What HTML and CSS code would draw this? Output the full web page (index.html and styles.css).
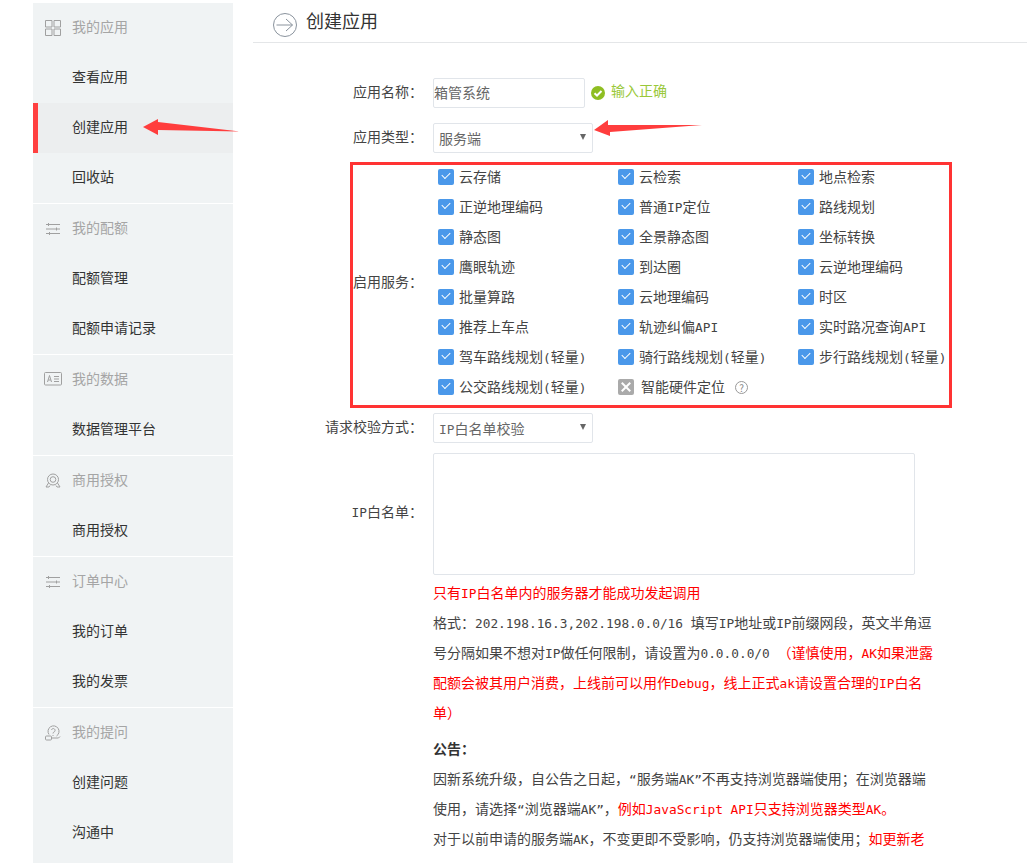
FILE: index.html
```html
<!DOCTYPE html>
<html lang="zh-CN">
<head>
    <meta charset="utf-8">
    <title>创建应用</title>
    <link rel="stylesheet" href="styles.css">
</head>
<body>
<div class="page">
    <div class="sidebar">
        <div class="nav-group">
            <div class="nav-head">
                <svg class="nav-icon" viewBox="0 0 16 16"><path d="M.5.5h6.500v6.500h-6.500zM9 .5h6.500v6.500h-6.500zM.5 9h6.500v6.500h-6.500zM9 9h6.500v6.500h-6.500z"/></svg>
                我的应用
            </div>
            <div class="nav-item">查看应用</div>
            <div class="nav-item active">创建应用</div>
            <div class="nav-item">回收站</div>
        </div>
        <div class="nav-group">
            <div class="nav-head">
                <svg class="nav-icon" viewBox="0 0 16 16"><path d="M1 3.500h14M1 8h14M1 12.500h14M3.500 2v3M11.500 6.500v3M4.500 11v3"/></svg>
                我的配额
            </div>
            <div class="nav-item">配额管理</div>
            <div class="nav-item">配额申请记录</div>
        </div>
        <div class="nav-group">
            <div class="nav-head">
                <svg class="nav-icon wide" viewBox="0 0 18 14"><rect x=".5" y=".5" width="17" height="12.500" rx="1"/><path d="M3.500 10l2-6.500 2 6.500M4.300 8h2.400M10 4.500h5M10 7h5M10 9.500h5"/></svg>
                我的数据
            </div>
            <div class="nav-item">数据管理平台</div>
        </div>
        <div class="nav-group">
            <div class="nav-head">
                <svg class="nav-icon" viewBox="0 0 16 16"><circle cx="8" cy="6.500" r="5.500"/><circle cx="8" cy="6.500" r="2.800"/><path d="M3.500 10l-2.500 4h3l1-1.500M12.500 10l2.500 4h-3l-1-1.500"/></svg>
                商用授权
            </div>
            <div class="nav-item">商用授权</div>
        </div>
        <div class="nav-group">
            <div class="nav-head">
                <svg class="nav-icon" viewBox="0 0 16 16"><path d="M1 3.500h14M1 8h14M1 12.500h14M3.500 2v3M11.500 6.500v3M4.500 11v3"/></svg>
                订单中心
            </div>
            <div class="nav-item">我的订单</div>
            <div class="nav-item">我的发票</div>
        </div>
        <div class="nav-group">
            <div class="nav-head">
                <svg class="nav-icon" viewBox="0 0 16 16"><path d="M4 9.500a5.500 5.500 0 1 1 7.500 1.500"/><path d="M6.500 5a1.800 1.800 0 1 1 2.500 2c-.7.4-1 .8-1 1.500M8 10v1"/><rect x=".5" y="11" width="6" height="4" rx="1"/><path d="M6.500 13h7l1.500-1.500"/></svg>
                我的提问
            </div>
            <div class="nav-item">创建问题</div>
            <div class="nav-item">沟通中</div>
        </div>
    </div>

    <div class="main">
        <div class="title-bar">
            <svg class="title-icon" viewBox="0 0 24 24"><circle cx="12" cy="12" r="11.500"/><path d="M3.500 12h16M13 6l6.500 6-6.500 6"/></svg>
            <h1>创建应用</h1>
        </div>

        <div class="form">
            <div class="row">
                <div class="label">应用名称：</div>
                <div class="input">箱管系统</div>
                <svg class="ok-icon" viewBox="0 0 14 14"><circle cx="7" cy="7" r="7"/><path d="M3.500 7.200l2.500 2.300 4.500-4.500"/></svg>
                <span class="ok-text">输入正确</span>
            </div>
            <div class="row type">
                <div class="label">应用类型：</div>
                <div class="select">服务端</div>
            </div>

            <div class="row services">
                <div class="label">启用服务：</div>
                <div class="service-grid">
                    <div class="service"><i class="check"></i><span>云存储</span></div>
                    <div class="service"><i class="check"></i><span>云检索</span></div>
                    <div class="service"><i class="check"></i><span>地点检索</span></div>
                    <div class="service"><i class="check"></i><span>正逆地理编码</span></div>
                    <div class="service"><i class="check"></i><span>普通<span class="en">IP</span>定位</span></div>
                    <div class="service"><i class="check"></i><span>路线规划</span></div>
                    <div class="service"><i class="check"></i><span>静态图</span></div>
                    <div class="service"><i class="check"></i><span>全景静态图</span></div>
                    <div class="service"><i class="check"></i><span>坐标转换</span></div>
                    <div class="service"><i class="check"></i><span>鹰眼轨迹</span></div>
                    <div class="service"><i class="check"></i><span>到达圈</span></div>
                    <div class="service"><i class="check"></i><span>云逆地理编码</span></div>
                    <div class="service"><i class="check"></i><span>批量算路</span></div>
                    <div class="service"><i class="check"></i><span>云地理编码</span></div>
                    <div class="service"><i class="check"></i><span>时区</span></div>
                    <div class="service"><i class="check"></i><span>推荐上车点</span></div>
                    <div class="service"><i class="check"></i><span>轨迹纠偏<span class="en">API</span></span></div>
                    <div class="service"><i class="check"></i><span>实时路况查询<span class="en">API</span></span></div>
                    <div class="service"><i class="check"></i><span>驾车路线规划<span class="en">(</span>轻量<span class="en">)</span></span></div>
                    <div class="service"><i class="check"></i><span>骑行路线规划<span class="en">(</span>轻量<span class="en">)</span></span></div>
                    <div class="service"><i class="check"></i><span>步行路线规划<span class="en">(</span>轻量<span class="en">)</span></span></div>
                    <div class="service"><i class="check"></i><span>公交路线规划<span class="en">(</span>轻量<span class="en">)</span></span></div>
                    <div class="service off"><i class="cross"></i><span>智能硬件定位</span><span class="help">?</span></div>
                </div>
            </div>

            <div class="row verify">
                <div class="label">请求校验方式：</div>
                <div class="select"><span class="en">IP</span>白名单校验</div>
            </div>
            <div class="row whitelist">
                <div class="label"><span class="en">IP</span>白名单：</div>
                <div class="textarea"></div>
            </div>

            <div class="notes">
                <p class="red">只有<span class="en">IP</span>白名单内的服务器才能成功发起调用</p>
                <p>格式：<span class="en">202.198.16.3,202.198.0.0/16 </span>填写<span class="en">IP</span>地址或<span class="en">IP</span>前缀网段，英文半角逗号分隔如果不想对<span class="en">IP</span>做任何限制，请设置为<span class="en">0.0.0.0/0 </span><span class="red">（谨慎使用，<span class="en">AK</span>如果泄露配额会被其用户消费，上线前可以用作<span class="en">Debug</span>，线上正式<span class="en">ak</span>请设置合理的<span class="en">IP</span>白名单）</span></p>
                <p class="notice-head">公告：</p>
                <p>因新系统升级，自公告之日起，<span class="en">“</span>服务端<span class="en">AK”</span>不再支持浏览器端使用；在浏览器端使用，请选择<span class="en">“</span>浏览器端<span class="en">AK”</span>，<span class="red">例如<span class="en">JavaScript API</span>只支持浏览器类型<span class="en">AK</span>。</span></p>
                <p>对于以前申请的服务端<span class="en">AK</span>，不变更即不受影响，仍支持浏览器端使用；<span class="red">如更新老</span></p>
            </div>
        </div>
    </div>

    <!-- 截图上的红色标注 -->
    <div class="mark-box"></div>
    <svg class="arrow arrow-nav" viewBox="0 0 98 16"><path d="M0 8L15 0v3l82 9.500-82-1.500v5z"/></svg>
    <svg class="arrow arrow-type" viewBox="0 0 108 16"><path d="M0 10L14 0v5h94L16 12v4z"/></svg>
</div>
</body>
</html>
```

FILE: styles.css
```css
html, body {
    margin: 0;
    height: 863px;
    overflow: hidden;
    background: #fff;
}
body {
    font-family: "Noto Sans CJK SC", "Open Sans", sans-serif;
    font-size: 14px;
    color: #444;
}
.en {
    font-family: "DejaVu Sans Mono", "Liberation Mono", monospace;
    font-size: 12.8px;
    line-height: 1;
}
.page {
    display: flex;
    position: relative;
    height: 863px;
    overflow: hidden;
}

/* sidebar */
.sidebar {
    flex: none;
    width: 200px;
    margin: 3px 0 0 33px;
    background: #f0f3f4;
}
.nav-group {
    border-bottom: 1px solid #fff;
}
.nav-group:last-child {
    border-bottom: 0;
}
.nav-head, .nav-item {
    display: flex;
    align-items: center;
    box-sizing: border-box;
    height: 50px;
    padding: 0 0 4px 39px;
    color: #333;
}
.nav-head {
    position: relative;
    color: #a5a5a5;
}
.nav-item.active {
    background: #eceeef;
    box-shadow: inset 5px 0 0 #ff4040;
}
.nav-icon {
    position: absolute;
    left: 12px;
    top: 17px;
    width: 16px;
    height: 16px;
    fill: none;
    stroke: #a0a0a0;
    stroke-width: 1;
}
.nav-icon.wide {
    left: 11px;
    width: 18px;
    height: 14px;
}

/* main */
.main {
    flex: 1;
    margin-left: 20px;
    min-width: 0;
}
.title-bar {
    display: flex;
    align-items: center;
    height: 42px;
    border-bottom: 1px solid #e4e6e8;
    padding-left: 20px;
}
.title-bar h1 {
    margin: 0 0 2px 9px;
    font-size: 18px;
    font-weight: normal;
    color: #333;
}
.title-icon {
    width: 24px;
    height: 24px;
    margin-top: 8px;
    fill: none;
    stroke: #8a939d;
    stroke-width: 1;
}
.form {
    padding-top: 35px;
}
.row {
    display: flex;
    align-items: center;
    margin-bottom: 15px;
}
.row.type {
    margin-bottom: 9px;
}
.label {
    flex: none;
    width: 170px;
    margin-right: 10px;
    padding-bottom: 5px;
    text-align: right;
    color: #444;
}
.services .label {
    padding-bottom: 3px;
}
.whitelist .label {
    padding-bottom: 7px;
}
.input, .select {
    box-sizing: border-box;
    height: 30px;
    line-height: 27px;
    border: 1px solid #e1e5ea;
    border-radius: 2px;
    color: #666;
}
.input {
    width: 152px;
}
.select {
    position: relative;
    width: 160px;
    padding-left: 5px;
    line-height: 29px;
}
.select::after {
    content: "";
    position: absolute;
    right: 6px;
    top: 10px;
    border: 3px solid transparent;
    border-top: 6px solid #666;
    border-bottom: 0;
}
.ok-icon {
    width: 14px;
    height: 14px;
    margin: 0 6px 0 6px;
    fill: #8fbe22;
    stroke: none;
}
.ok-icon path {
    fill: none;
    stroke: #fff;
    stroke-width: 2;
}
.ok-text {
    color: #9ac83a;
    margin-top: -6px;
}
.services {
    margin: 0 0 11px;
}
.service-grid {
    display: grid;
    grid-template-columns: repeat(3, 180px);
    grid-auto-rows: 30px;
    margin-left: 5px;
    width: 540px;
}
.service {
    display: flex;
    align-items: center;
    box-sizing: border-box;
    padding-bottom: 2px;
    white-space: nowrap;
}
.check, .cross {
    flex: none;
    position: relative;
    width: 16px;
    height: 16px;
    margin: 2px 5px 0 0;
    border-radius: 2px;
    background: #4a98ea;
}
.check::after {
    content: "";
    position: absolute;
    left: 4px;
    top: 3px;
    width: 7px;
    height: 4px;
    border-left: 1.5px solid #fff;
    border-bottom: 1.5px solid #fff;
    transform: rotate(-45deg);
}
.cross {
    background: #aaa;
    margin-right: 7px;
}
.cross::before, .cross::after {
    content: "";
    position: absolute;
    left: 2px;
    top: 7px;
    width: 12px;
    height: 2px;
    background: #fff;
    transform: rotate(45deg);
}
.cross::after {
    transform: rotate(-45deg);
}
.help {
    width: 11px;
    height: 11px;
    margin: 2px 0 0 10px;
    border: 1px solid #999;
    border-radius: 50%;
    color: #888;
    font-size: 10px;
    line-height: 11px;
    text-align: center;
}
.verify {
    margin-bottom: 10px;
}
.whitelist {
    margin-bottom: 2px;
}
.textarea {
    box-sizing: border-box;
    width: 482px;
    height: 122px;
    border: 1px solid #e1e5ea;
    border-radius: 2px;
}
.notes {
    width: 500px;
    margin-left: 180px;
    line-height: 30px;
    color: #444;
}
.notes p {
    margin: 0;
}
.notes .red {
    color: #f00;
}
.notes .notice-head {
    margin-top: 6px;
    font-weight: bold;
    color: #333;
}

/* annotations */
.mark-box {
    position: absolute;
    left: 350px;
    top: 162px;
    width: 596px;
    height: 240px;
    border: 3px solid #f33;
}
.arrow {
    position: absolute;
    fill: #ff3d3d;
}
.arrow-nav {
    left: 143px;
    top: 119px;
    width: 98px;
    height: 16px;
}
.arrow-type {
    left: 594px;
    top: 120px;
    width: 108px;
    height: 16px;
}
```
